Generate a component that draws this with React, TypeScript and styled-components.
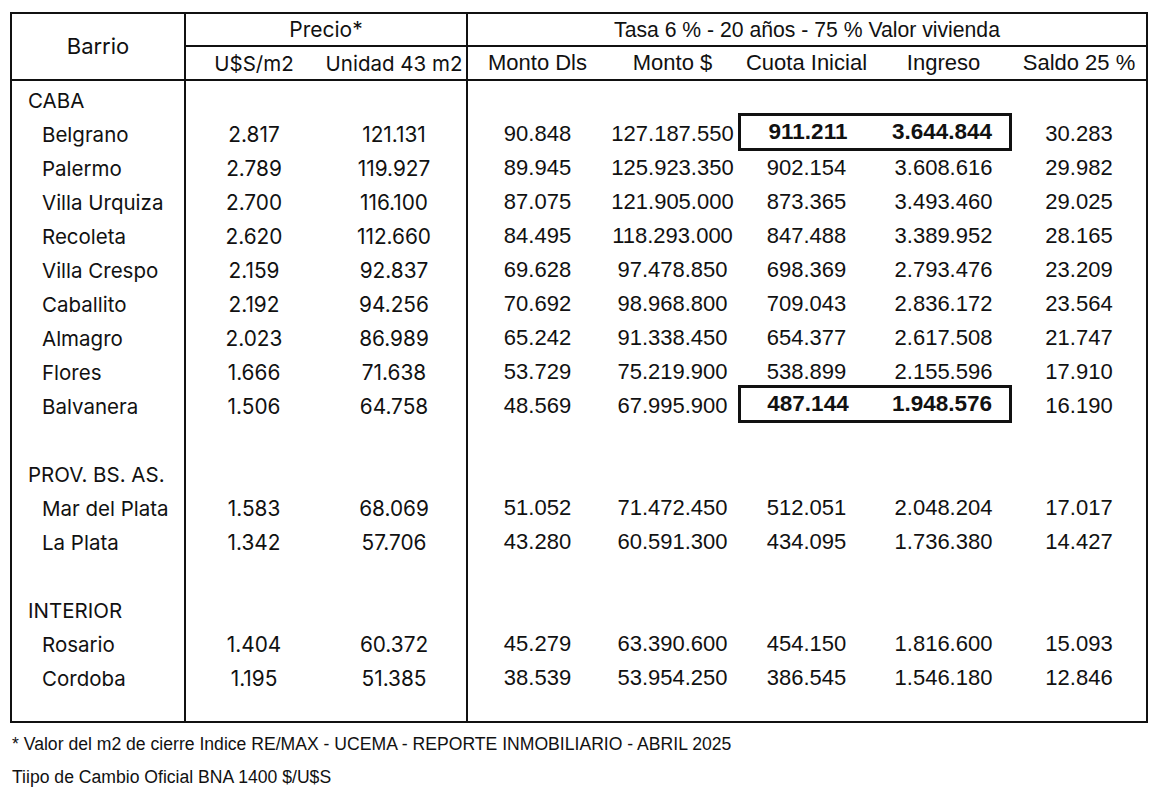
import React from "react";
import styled, { createGlobalStyle } from "styled-components";

const HUMAN = `Inter, "Liberation Sans", sans-serif`;
const ARIAL = `"Liberation Sans", Arial, sans-serif`;

const GlobalStyle = createGlobalStyle`
  html, body { margin: 0; padding: 0; background: #ffffff; }
  body { font-family: ${HUMAN}; color: #111; }
  * { box-sizing: border-box; }
`;

type Item = {
  kind: "item";
  name: string;
  usd: string;
  unit: string;
  dls: string;
  pesos: string;
  cuota: string;
  ingreso: string;
  saldo: string;
  hl?: boolean;
};
type Row = { kind: "section"; name: string } | { kind: "blank" } | Item;

const it = (
  name: string,
  usd: string,
  unit: string,
  dls: string,
  pesos: string,
  cuota: string,
  ingreso: string,
  saldo: string,
  hl = false
): Item => ({ kind: "item", name, usd, unit, dls, pesos, cuota, ingreso, saldo, hl });

const ROWS: Row[] = [
  { kind: "section", name: "CABA" },
  it("Belgrano", "2.817", "121.131", "90.848", "127.187.550", "911.211", "3.644.844", "30.283", true),
  it("Palermo", "2.789", "119.927", "89.945", "125.923.350", "902.154", "3.608.616", "29.982"),
  it("Villa Urquiza", "2.700", "116.100", "87.075", "121.905.000", "873.365", "3.493.460", "29.025"),
  it("Recoleta", "2.620", "112.660", "84.495", "118.293.000", "847.488", "3.389.952", "28.165"),
  it("Villa Crespo", "2.159", "92.837", "69.628", "97.478.850", "698.369", "2.793.476", "23.209"),
  it("Caballito", "2.192", "94.256", "70.692", "98.968.800", "709.043", "2.836.172", "23.564"),
  it("Almagro", "2.023", "86.989", "65.242", "91.338.450", "654.377", "2.617.508", "21.747"),
  it("Flores", "1.666", "71.638", "53.729", "75.219.900", "538.899", "2.155.596", "17.910"),
  it("Balvanera", "1.506", "64.758", "48.569", "67.995.900", "487.144", "1.948.576", "16.190", true),
  { kind: "blank" },
  { kind: "section", name: "PROV. BS. AS." },
  it("Mar del Plata", "1.583", "68.069", "51.052", "71.472.450", "512.051", "2.048.204", "17.017"),
  it("La Plata", "1.342", "57.706", "43.280", "60.591.300", "434.095", "1.736.380", "14.427"),
  { kind: "blank" },
  { kind: "section", name: "INTERIOR" },
  it("Rosario", "1.404", "60.372", "45.279", "63.390.600", "454.150", "1.816.600", "15.093"),
  it("Cordoba", "1.195", "51.385", "38.539", "53.954.250", "386.545", "1.546.180", "12.846"),
];

const GROUPS = "172px 282px 680px";
const PRICE_COLS = "136px 144px";
const TASA_COLS = "139px 131px 137px 137px 134px";
const LINE = "2px solid #111";

const Page = styled.div`
  width: 1156px;
  padding: 12px 0 0 10px;
`;

const Table = styled.div`
  width: 1138px;
  border: ${LINE};
`;

const Header = styled.div`
  display: grid;
  grid-template-columns: ${GROUPS};
  grid-template-rows: 33px 32px;
  border-bottom: ${LINE};
`;

const BarrioHead = styled.div`
  grid-row: 1 / 3;
  grid-column: 1;
  display: flex;
  align-items: center;
  justify-content: center;
  font-family: ${HUMAN};
  font-size: 22px;
  padding-bottom: 2px;
`;

const GroupTitle = styled.div<{ $arial?: boolean }>`
  grid-row: 1;
  border-left: ${LINE};
  border-bottom: ${LINE};
  display: flex;
  align-items: center;
  justify-content: center;
  font-family: ${(p) => (p.$arial ? ARIAL : HUMAN)};
  font-size: ${(p) => (p.$arial ? "21.2px" : "21px")};
  white-space: nowrap;
`;

const SubHeads = styled.div<{ $cols: string; $arial?: boolean }>`
  grid-row: 2;
  border-left: ${LINE};
  display: grid;
  grid-template-columns: ${(p) => p.$cols};
  align-items: center;
  justify-items: center;
  font-family: ${(p) => (p.$arial ? ARIAL : HUMAN)};
  font-size: ${(p) => (p.$arial ? "22px" : "20.5px")};
  white-space: nowrap;
`;

const Body = styled.div`
  display: grid;
  grid-template-columns: ${GROUPS};
`;

const Group = styled.div<{ $divided?: boolean }>`
  padding: 2px 0 26px;
  border-left: ${(p) => (p.$divided ? LINE : "none")};
  display: flex;
  flex-direction: column;
`;

const NameCell = styled.div<{ $section?: boolean }>`
  height: 34px;
  display: flex;
  align-items: center;
  padding-left: ${(p) => (p.$section ? "16px" : "30px")};
  font-family: ${HUMAN};
  font-size: 20.5px;
  white-space: nowrap;
`;

const DataRow = styled.div<{ $cols: string }>`
  height: 34px;
  display: grid;
  grid-template-columns: ${(p) => p.$cols};
  align-items: center;
  justify-items: center;
`;

const HumanNum = styled.span`
  font-family: ${HUMAN};
  font-size: 20.8px;
`;

const ArialNum = styled.span`
  font-family: ${ARIAL};
  font-size: 22px;
`;

const Highlight = styled.div`
  grid-column: 3 / span 2;
  align-self: stretch;
  justify-self: stretch;
  margin: -4px 0 0;
  border: 3px solid #111;
  display: grid;
  grid-template-columns: 1fr 1fr;
  align-items: center;
  justify-items: center;
`;

const BoldNum = styled.span`
  font-family: ${ARIAL};
  font-weight: 700;
  font-size: 22.5px;
`;

const Notes = styled.div`
  margin-top: 5px;
  padding-left: 2px;
  font-family: ${ARIAL};
  font-size: 17.6px;
`;

const Note = styled.div`
  height: 33px;
  display: flex;
  align-items: center;
  white-space: nowrap;
`;

export default function App() {
  return (
    <>
      <GlobalStyle />
      <Page>
        <Table>
          <Header>
            <BarrioHead>Barrio</BarrioHead>
            <GroupTitle>Precio*</GroupTitle>
            <GroupTitle $arial>Tasa 6 % - 20 años - 75 % Valor vivienda</GroupTitle>
            <SubHeads $cols={PRICE_COLS}>
              <span>U$S/m2</span>
              <span>Unidad 43 m2</span>
            </SubHeads>
            <SubHeads $cols={TASA_COLS} $arial>
              <span>Monto Dls</span>
              <span>Monto $</span>
              <span>Cuota Inicial</span>
              <span>Ingreso</span>
              <span>Saldo 25 %</span>
            </SubHeads>
          </Header>
          <Body>
            <Group>
              {ROWS.map((r, i) => (
                <NameCell key={i} $section={r.kind === "section"}>
                  {r.kind === "blank" ? "" : r.name}
                </NameCell>
              ))}
            </Group>
            <Group $divided>
              {ROWS.map((r, i) => (
                <DataRow key={i} $cols={PRICE_COLS}>
                  {r.kind === "item" && (
                    <>
                      <HumanNum>{r.usd}</HumanNum>
                      <HumanNum>{r.unit}</HumanNum>
                    </>
                  )}
                </DataRow>
              ))}
            </Group>
            <Group $divided>
              {ROWS.map((r, i) => (
                <DataRow key={i} $cols={TASA_COLS}>
                  {r.kind === "item" && (
                    <>
                      <ArialNum>{r.dls}</ArialNum>
                      <ArialNum>{r.pesos}</ArialNum>
                      {r.hl ? (
                        <Highlight>
                          <BoldNum>{r.cuota}</BoldNum>
                          <BoldNum>{r.ingreso}</BoldNum>
                        </Highlight>
                      ) : (
                        <>
                          <ArialNum>{r.cuota}</ArialNum>
                          <ArialNum>{r.ingreso}</ArialNum>
                        </>
                      )}
                      <ArialNum>{r.saldo}</ArialNum>
                    </>
                  )}
                </DataRow>
              ))}
            </Group>
          </Body>
        </Table>
        <Notes>
          <Note>* Valor del m2 de cierre Indice RE/MAX - UCEMA - REPORTE INMOBILIARIO - ABRIL 2025</Note>
          <Note>Tiipo de Cambio Oficial BNA 1400 $/U$S</Note>
        </Notes>
      </Page>
    </>
  );
}
